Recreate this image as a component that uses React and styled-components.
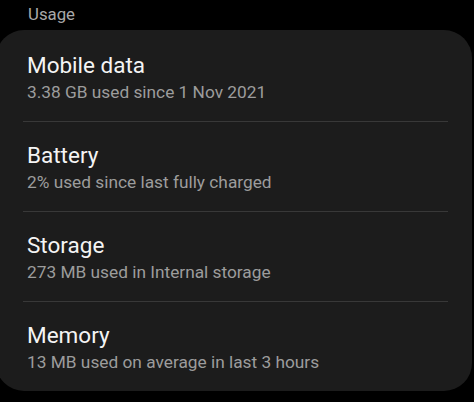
import styled, { createGlobalStyle } from "styled-components";

const GlobalStyle = createGlobalStyle`
  html, body {
    margin: 0;
    padding: 0;
    background: #000;
  }

  body {
    font-family: Roboto, "Noto Sans", "Liberation Sans", sans-serif;
    -webkit-font-smoothing: antialiased;
  }
`;

const Screen = styled.div`
  width: 474px;
  height: 402px;
  overflow: hidden;
  background: #000;
`;

const SectionLabel = styled.div`
  padding: 4px 0 0 28px;
  margin-bottom: 6px;
  font-size: 16.8px;
  line-height: 20px;
  color: #a9a9a9;
`;

const Card = styled.div`
  margin-left: -4px;
  width: 476px;
  box-sizing: border-box;
  padding: 2px 24px 0 27px;
  border-radius: 28px;
  background: #1c1c1c;
`;

const Row = styled.div`
  display: flex;
  flex-direction: column;
  padding: 19px 0 18px 4px;
  border-bottom: ${(props) => (props.last ? "none" : "1px solid #383838")};
`;

const Title = styled.div`
  font-size: 22.5px;
  line-height: 28px;
  color: #f4f4f4;
`;

const Subtitle = styled.div`
  margin-top: 2px;
  font-size: 17.3px;
  line-height: 22px;
  color: #9c9c9c;
`;

const ITEMS = [
  { title: "Mobile data", detail: "3.38 GB used since 1 Nov 2021" },
  { title: "Battery", detail: "2% used since last fully charged" },
  { title: "Storage", detail: "273 MB used in Internal storage" },
  { title: "Memory", detail: "13 MB used on average in last 3 hours" },
];

function App() {
  return (
    <Screen>
      <GlobalStyle />
      <SectionLabel>Usage</SectionLabel>
      <Card>
        {
          ITEMS.map((item, index) => (
            <Row key={item.title} last={index === ITEMS.length - 1}>
              <Title>{ item.title }</Title>
              <Subtitle>{ item.detail }</Subtitle>
            </Row>
          ))
        }
      </Card>
    </Screen>
  );
}

export default App;
